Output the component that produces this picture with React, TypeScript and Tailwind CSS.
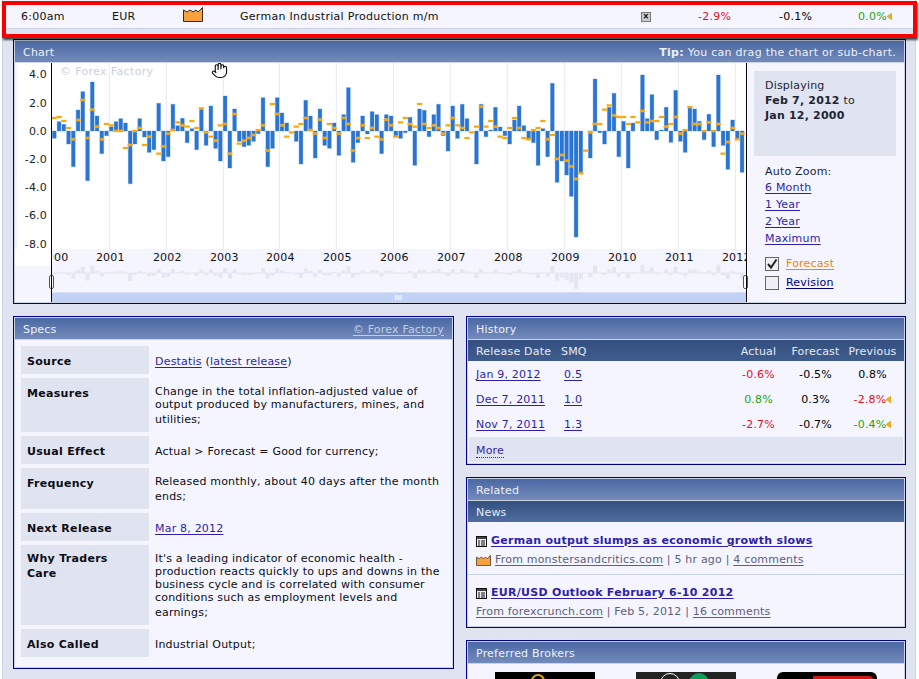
import React from "react";
import { Hand } from "lucide-react";

// [bar, forecast] in thirds of a pixel from the zero line
const D: [number, number | null][] = [
[-22,39],[28,42],[20,30],[-39,9],[-107,-25],[63,33],[118,93],[-149,-21],[147,64],[45,13],[-68,-25],[-14,21],[13,17],[28,0],[37,0],[24,-51],[-158,-42],[-39,0],[37,9],[-18,-42],[-64,-17],[-56,null],[83,-68],[-90,-46],[-77,-8],[80,3],[16,26],[38,17],[-35,13],[7,30],[-56,9],[68,68],[-43,-4],[75,-17],[-52,-29],[-90,17],[105,21],[-111,-68],[66,51],[-31,-38],[-47,-29],[-43,-21],[-31,-12],[-8,3],[100,17],[-107,-59],[-52,81],[100,51],[54,17],
[24,-17],[0,-4],[-31,13],[-99,21],[92,39],[45,3],[-81,-8],[66,34],[-43,-21],[-52,21],[24,9],[-73,-8],[49,39],[130,21],[-94,-59],[-35,-21],[45,17],[-9,-21],[58,9],[49,-17],[-68,-25],[49,34],[45,17],[-17,-17],[-22,26],[-5,39],[41,21],[-103,13],[66,81],[62,21],[-17,9],[49,17],[80,9],[-14,-8],[-60,17],[75,39],[-22,17],[80,9],[37,-21],[0,-4],[-99,13],[80,73],[-17,13],[3,30],[71,13],[12,-17],[-14,-21],[-39,9],[33,39],
[75,9],[16,-21],[-26,-25],[-35,3],[-103,9],[7,30],[-77,-25],[143,-12],[-154,-84],[-90,-72],[-132,-89],[-196,-106],[-318,-144],[-128,-127],[0,-59],[-81,-4],[156,21],[-5,21],[-39,64],[71,77],[113,47],[-77,42],[29,42],[-111,21],[24,42],[0,26],[168,60],[37,26],[109,30],[-26,30],[3,42],[71,13],[-34,21],[122,42],[-31,-8],[-64,3],[71,72],[66,21],[29,21],[-26,0],[50,26],[-47,0],[168,21],[-43,-68],[-115,-33],[33,9],[-26,-25],[-124,-8],
];
const cx = (i: number) => 54.33 + i * 4.743;
const ZERO = 131;
const YEARS: [string, number][] = [["2001",109.3],["2002",166.3],["2003",223.3],["2004",279.3],["2005",336.3],["2006",393.3],["2007",450.3],["2008",507.3],["2009",564.3],["2010",621.3],["2011",678.3],["2012",735.3]];
const AXIS: [string, number][] = [["4.0",74],["2.0",102.5],["0.0",131],["-2.0",159],["-4.0",187],["-6.0",215],["-8.0",244]];

function Chart() {
  return (
    <svg viewBox="15 63 733 239" className="w-[733px] h-[239px] shrink-0 block" fontFamily="'DejaVu Sans', sans-serif" fontSize="11">
      <rect x="15" y="63" width="733" height="240" fill="#ffffff" />
      <rect x="15" y="63" width="2" height="187" fill="#f4f5fe" />
      <rect x="15" y="266" width="37" height="37" fill="#f4f5fe" />
      <rect x="52" y="249" width="695" height="43" fill="#f4f5fe" />
      {YEARS.map(([y, x]) => <rect key={y} x={x - 0.5} y="63" width="1" height="186" fill="#e9e9ee" />)}
      {D.map(([b], i) => b === 0 ? null : (
        <rect key={i} x={cx(i) - 2.35} y={(b > 0 ? ZERO - b / 3 : ZERO) - 0.5} width="4.7" height={Math.abs(b) / 3 + 1} fill="#bcd4f2" />
      ))}
      {D.map(([b], i) => b === 0 ? null : (
        <rect key={i} x={cx(i) - 1.85} y={b > 0 ? ZERO - b / 3 : ZERO} width="3.7" height={Math.abs(b) / 3} fill="#2a75d2" />
      ))}
      {D.map(([, f], i) => f === null ? null : (
        <g key={i}>
          <rect x={cx(i) - 3} y={ZERO - f / 3 - 1.5} width="6" height="3" fill="#fbd27a" opacity="0.45" />
          <rect x={cx(i) - 2.5} y={ZERO - f / 3 - 1} width="5" height="2" fill="#f8a80e" />
        </g>
      ))}
      {AXIS.map(([t, y]) => <text key={t} x="47" y={y + 4} textAnchor="end" fill="#222">{t}</text>)}
      <text x="60" y="75" fill="#c9d0e2" letterSpacing="0.35">© Forex Factory</text>
      <clipPath id="xclip"><rect x="53" y="249" width="693" height="20" /></clipPath>
      <text x="54" y="261" textAnchor="middle" fill="#111" clipPath="url(#xclip)">2000</text>
      {YEARS.map(([y, x]) => <text key={y} x={x + 1} y="261" textAnchor="middle" fill="#111" clipPath="url(#xclip)">{y}</text>)}
      <rect x="52" y="272.5" width="695" height="1" fill="#e6e8f5" />
      {D.map(([b], i) => (
        <rect key={i} x={cx(i) - 2} y={b > 0 ? 273 - b * 0.05 : 273} width="4" height={Math.abs(b) * 0.05} fill="#e4e6f3" />
      ))}
      <rect x="52" y="292" width="695" height="11" fill="#c2d2f7" />
      <rect x="52" y="292" width="695" height="1" fill="#d6e0fa" />
      {[395, 396.5, 398, 399.5, 401].map((x) => <rect key={x} x={x} y="295" width="1" height="5" fill="#eef2fd" />)}
      <rect x="49.5" y="275.5" width="4" height="13" rx="1.5" fill="#fff" stroke="#555" />
      <rect x="743.5" y="275.5" width="4" height="13" rx="1.5" fill="#fff" stroke="#555" />
      <rect x="51" y="63" width="1" height="240" fill="#000" />
      <rect x="746" y="63" width="1" height="240" fill="#000" />
      <Hand x="211" y="62" width="17" height="17" stroke="#000" fill="#fff" strokeWidth={1.5} />
    </svg>
  );
}

function Arrow() {
  return (
    <svg width="5" height="7" viewBox="0 0 5 7" className="inline-block align-[0px]">
      <path d="M5 0 L0 3.5 L5 7 Z" fill="#f1b21f" stroke="#d98d00" strokeWidth="0.5" />
    </svg>
  );
}

function Factory({ w, h }: { w: number; h: number }) {
  return (
    <svg width={w} height={h} viewBox="0 0 20 15" className="block shrink-0">
      <path d="M0.5 14.5 V3 L4 5 L7 3 L10 5 L13 3 L15 5 L19.5 0.5 V14.5 Z" fill="#f7a13f" stroke="#3a2a10" strokeWidth="1" />
    </svg>
  );
}

function NewsIcon() {
  return (
    <svg width="11" height="11" viewBox="0 0 11 11" className="block shrink-0">
      <rect x="0.5" y="0.5" width="10" height="10" fill="#eee" stroke="#111" />
      <rect x="1" y="1" width="9" height="2" fill="#444" />
      <path d="M2 5 H4 M5 5 H9 M2 7 H4 M5 7 H9 M2 9 H4 M5 9 H9" stroke="#111" strokeWidth="1" />
    </svg>
  );
}

function Panel({ title, right, className, children }: { title: string; right?: React.ReactNode; className?: string; children: React.ReactNode }) {
  return (
    <section className={"border border-[#00008b] bg-[#ccd2e6] p-px " + (className ?? "")}>
      <div className="h-full flex flex-col bg-[#f4f5fe]">
        <header className="h-[22px] shrink-0 flex items-center justify-between px-[8px] pt-[3px] text-[#eef0fa] bg-linear-to-b from-[#4a68a3] to-[#738bba] border-b border-[#ccd2e6]">
          <span>{title}</span>
          {right}
        </header>
        {children}
      </div>
    </section>
  );
}

const L = "text-[#2f1fa8] underline underline-offset-[2px]";

function SpecRow({ label, h, single, labelPad, children }: { label: React.ReactNode; h: string; single?: boolean; labelPad?: string; children: React.ReactNode }) {
  return (
    <div className={"flex gap-[6px] " + h}>
      <div className={"w-[128px] shrink-0 bg-[#e0e4f1] pl-[6px] font-bold text-[#0c0c14] leading-[15px] tracking-[0.3px] " + (labelPad ?? "pt-[8px]")}>{label}</div>
      <div className={"flex-1 text-[#0c0c14] leading-[13px] " + (single ? "pt-[9px]" : "pt-[7px]")}>{children}</div>
    </div>
  );
}

function HRow({ date, smq, a, ac, f, p, pc, arrow }: { date: string; smq: string; a: string; ac: string; f: string; p: string; pc: string; arrow?: boolean }) {
  return (
    <div className="h-[25px] flex items-center pl-[8px]">
      <a className={"w-[88px] shrink-0 " + L}>{date}</a>
      <div className="w-[166px] shrink-0"><a className={L}>{smq}</a></div>
      <div className={"w-[57px] text-center " + ac}>{a}</div>
      <div className="w-[57px] text-center text-black">{f}</div>
      <div className={"w-[57px] text-center " + pc}>{p}{arrow && <Arrow />}</div>
    </div>
  );
}

const RED = "text-[#e0101c]";
const GREEN = "text-[#1fa50f]";

export default function App() {
  return (
    <div className="relative w-[919px] h-[679px] overflow-hidden bg-white text-[11px] tracking-[0.2px] font-['DejaVu_Sans',sans-serif]">
      <div className="ml-[2px] w-[914px] h-[679px] border-x border-[#ccd2e6] bg-[#e0e4f1]">
        <div className="h-[29px] flex items-center pl-[18px] pt-[6px] bg-[#f4f5fe] border-b border-[#ccd2e6] text-[#111] tracking-[0.28px]">
          <span className="w-[91px] shrink-0">6:00am</span>
          <span className="w-[71px] shrink-0">EUR</span>
          <span className="w-[57px] shrink-0 -mt-[6px]"><Factory w={20} h={15} /></span>
          <span className="w-[401px] shrink-0">German Industrial Production m/m</span>
          <span className="w-[57px] shrink-0">
            <span className="flex items-center justify-center w-[10px] h-[10px] bg-[#ccc] border border-[#777]"><span className="text-[8px] leading-none font-bold text-black">×</span></span>
          </span>
          <span className={"w-[81px] shrink-0 " + RED}>-2.9%</span>
          <span className="w-[79px] shrink-0 text-black">-0.1%</span>
          <span className={GREEN}>0.0%<Arrow /></span>
        </div>

        <div className="pl-[10px] pt-[10px]">
          <Panel title="Chart" className="w-[893px] h-[265px]" right={<span className="text-[#eef0fa] tracking-[0.27px]"><b>Tip:</b> You can drag the chart or sub-chart.</span>}>
            <div className="flex flex-1 min-h-0">
              <Chart />
              <div className="flex-1 pl-[6px] pt-[8px]">
                <div className="w-[142px] h-[85px] bg-[#e0e4f1] pl-[11px] pt-[7px] leading-[15px] text-[#1c2434]">
                  <div>Displaying</div>
                  <div><b>Feb 7, 2012</b> to</div>
                  <div><b>Jan 12, 2000</b></div>
                </div>
                <div className="pl-[11px] pt-[8px] text-[#1c2434]">
                  <div className="h-[15px] leading-[15px]">Auto Zoom:</div>
                  <div className="flex flex-col leading-[17px]">
                    <a className={L}>6 Month</a>
                    <a className={L}>1 Year</a>
                    <a className={L}>2 Year</a>
                    <a className={L}>Maximum</a>
                  </div>
                  <div className="mt-[10px] flex flex-col gap-[5px]">
                    <div className="flex items-center gap-[7px] h-[14px]">
                      <span className="w-[14px] h-[14px] border border-[#666] bg-[#f0f0f4] flex items-center justify-center">
                        <svg width="12" height="12" viewBox="0 0 12 12"><path d="M2 6 L5 9.5 L10.5 1.5" fill="none" stroke="#222" strokeWidth="2" /></svg>
                      </span>
                      <a className="text-[#e8860f] underline underline-offset-[2px]">Forecast</a>
                    </div>
                    <div className="flex items-center gap-[7px] h-[14px]">
                      <span className="w-[14px] h-[14px] border border-[#666] bg-[#f0f0f4]" />
                      <a className="text-[#000080] underline underline-offset-[2px]">Revision</a>
                    </div>
                  </div>
                </div>
              </div>
            </div>
          </Panel>

          <div className="flex gap-[12px] mt-[12px] items-start">
            <Panel title="Specs" className="w-[441px] h-[353px]" right={<a className="text-[#c4cde4] underline underline-offset-[2px]">© Forex Factory</a>}>
              <div className="flex flex-col gap-[4px] px-[6px] pt-[6px]">
                <SpecRow label="Source" h="h-[28px]" single><a className={L}>Destatis</a> (<a className={L}>latest release</a>)</SpecRow>
                <SpecRow label="Measures" h="h-[54px]">
                  <div>Change in the total inflation-adjusted value of</div>
                  <div>output produced by manufacturers, mines, and</div>
                  <div className="mt-[2px]">utilities;</div>
                </SpecRow>
                <SpecRow label="Usual Effect" h="h-[28px]" single>Actual &gt; Forecast = Good for currency;</SpecRow>
                <SpecRow label="Frequency" h="h-[41px]">
                  <div>Released monthly, about 40 days after the month</div>
                  <div className="mt-[2px]">ends;</div>
                </SpecRow>
                <SpecRow label="Next Release" h="h-[28px]" single><a className={L}>Mar 8, 2012</a></SpecRow>
                <SpecRow label={<>Why Traders<br />Care</>} h="h-[80px]" labelPad="pt-[6px]">
                  <div>It's a leading indicator of economic health -</div>
                  <div>production reacts quickly to ups and downs in the</div>
                  <div>business cycle and is correlated with consumer</div>
                  <div>conditions such as employment levels and</div>
                  <div className="mt-[2px]">earnings;</div>
                </SpecRow>
                <SpecRow label="Also Called" h="h-[28px]" single>Industrial Output;</SpecRow>
              </div>
            </Panel>

            <div className="w-[440px] flex flex-col gap-[12px]">
              <Panel title="History" className="h-[149px]">
                <div className="h-[21px] shrink-0 flex items-center pl-[8px] pt-[3px] text-[#e6eaf6] bg-linear-to-b from-[#34507f] to-[#3f5c8e]">
                  <span className="w-[85px] shrink-0">Release Date</span>
                  <span className="w-[169px] shrink-0">SMQ</span>
                  <span className="w-[57px] text-center">Actual</span>
                  <span className="w-[57px] text-center">Forecast</span>
                  <span className="w-[57px] text-center">Previous</span>
                </div>
                <div className="pt-[2px] h-[76px]">
                  <HRow date="Jan 9, 2012" smq="0.5" a="-0.6%" ac={RED} f="-0.5%" p="0.8%" pc="text-black" />
                  <HRow date="Dec 7, 2011" smq="1.0" a="0.8%" ac={GREEN} f="0.3%" p="-2.8%" pc={RED} arrow />
                  <HRow date="Nov 7, 2011" smq="1.3" a="-2.7%" ac={RED} f="-0.7%" p="-0.4%" pc={GREEN} arrow />
                </div>
                <div className="mx-px flex-1 mb-[1px] bg-[#e0e4f1] pl-[7px] pt-[6px]">
                  <a className="text-[#3a22a8] border-b border-dotted border-[#2f1fa8]">More</a>
                </div>
              </Panel>

              <Panel title="Related" className="h-[151px]">
                <div className="h-[21px] shrink-0 flex items-center pl-[8px] pt-[3px] text-[#e6eaf6] bg-linear-to-b from-[#34507f] to-[#4f6d9f]">News</div>
                <div className="flex flex-col">
                  <div className="h-[53px] border-b border-[#ccd2e6] pl-[8px] pt-[12px]">
                    <div className="flex items-center gap-[4px] h-[14px]">
                      <NewsIcon />
                      <a className={"font-bold tracking-[0.29px] " + L}>German output slumps as economic growth slows</a>
                    </div>
                    <div className="flex items-center gap-[4px] h-[14px] mt-[5px] text-[#5c6080]">
                      <Factory w={15} h={11} />
                      <span><a className="underline underline-offset-[2px]">From monstersandcritics.com</a> | 5 hr ago | <a className="underline underline-offset-[2px]">4 comments</a></span>
                    </div>
                  </div>
                  <div className="pl-[8px] pt-[11px]">
                    <div className="flex items-center gap-[4px] h-[14px]">
                      <NewsIcon />
                      <a className={"font-bold tracking-[0.29px] " + L}>EUR/USD Outlook February 6-10 2012</a>
                    </div>
                    <div className="h-[14px] mt-[4px] text-[#5c6080]">
                      <a className="underline underline-offset-[2px]">From forexcrunch.com</a> | Feb 5, 2012 | <a className="underline underline-offset-[2px]">16 comments</a>
                    </div>
                  </div>
                </div>
              </Panel>

              <Panel title="Preferred Brokers" className="h-[80px]">
                <div className="flex pl-[27px] gap-[41px] pt-[8px]">
                  <div className="w-[100px] h-[40px] bg-black relative overflow-hidden">
                    <span className="absolute left-[36px] top-[2px] w-[14px] h-[14px] rounded-full border-2 border-[#d9a521]" />
                  </div>
                  <div className="w-[100px] h-[40px] bg-[#222] relative overflow-hidden">
                    <span className="absolute left-[24px] top-[1px] w-[20px] h-[20px] rounded-full border border-white" />
                    <span className="absolute left-[53px] top-[1px] w-[20px] h-[20px] rounded-full bg-[#0f9a58]" />
                  </div>
                  <div className="w-[100px] h-[40px] bg-black rounded-t-[6px] relative overflow-hidden">
                    <span className="absolute left-[36px] top-[4px] w-[60px] h-[36px] bg-[#d01818] rounded-tr-[4px]" />
                  </div>
                </div>
              </Panel>
            </div>
          </div>
        </div>
      </div>
      {/* red highlight drawn over the page */}
      <div className="absolute left-[2px] top-[1px] w-[915px] h-[37px] border-[4px] border-[#f60000] shadow-[1px_2px_2px_rgba(0,0,0,0.7)] pointer-events-none" />
    </div>
  );
}
